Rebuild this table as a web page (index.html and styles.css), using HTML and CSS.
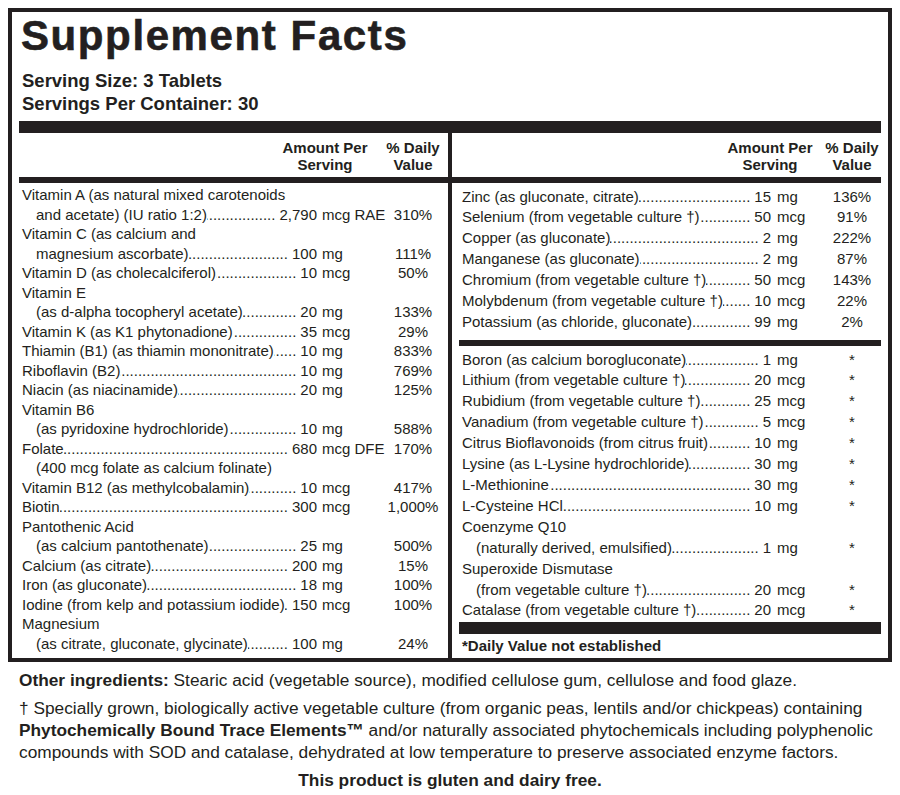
FILE: index.html
```html
<!DOCTYPE html>
<html>
<head>
<meta charset="utf-8">
<link rel="stylesheet" href="styles.css">
</head>
<body>
<div class="label">
  <h1 class="title">Supplement Facts</h1>
  <div class="serving">Serving Size: 3 Tablets</div>
  <div class="serving">Servings Per Container: 30</div>
  <div class="bar"></div>
  <div class="facts">
    <div class="head head-left"><span></span><span>Amount Per<br>Serving</span><span>% Daily<br>Value</span></div>
    <div class="divider"></div>
    <div class="head head-right"><span></span><span>Amount Per<br>Serving</span><span>% Daily<br>Value</span></div>
    <div class="sep"></div>

    <div class="col col-left">
      <div class="line">Vitamin A (as natural mixed carotenoids</div>
      <div class="row"><div class="lead ind"><span class="n">and acetate) (IU ratio 1:2)</span><span class="d"></span><span class="a">2,790</span></div><div class="u">mcg RAE</div><div class="v">310%</div></div>
      <div class="line">Vitamin C (as calcium and</div>
      <div class="row"><div class="lead ind"><span class="n">magnesium ascorbate)</span><span class="d"></span><span class="a">100</span></div><div class="u">mg</div><div class="v">111%</div></div>
      <div class="row"><div class="lead"><span class="n">Vitamin D (as cholecalciferol)</span><span class="d"></span><span class="a">10</span></div><div class="u">mcg</div><div class="v">50%</div></div>
      <div class="line">Vitamin E</div>
      <div class="row"><div class="lead ind"><span class="n">(as d-alpha tocopheryl acetate)</span><span class="d"></span><span class="a">20</span></div><div class="u">mg</div><div class="v">133%</div></div>
      <div class="row"><div class="lead"><span class="n">Vitamin K (as K1 phytonadione)</span><span class="d"></span><span class="a">35</span></div><div class="u">mcg</div><div class="v">29%</div></div>
      <div class="row"><div class="lead"><span class="n">Thiamin (B1) (as thiamin mononitrate)</span><span class="d"></span><span class="a">10</span></div><div class="u">mg</div><div class="v">833%</div></div>
      <div class="row"><div class="lead"><span class="n">Riboflavin (B2)</span><span class="d"></span><span class="a">10</span></div><div class="u">mg</div><div class="v">769%</div></div>
      <div class="row"><div class="lead"><span class="n">Niacin (as niacinamide)</span><span class="d"></span><span class="a">20</span></div><div class="u">mg</div><div class="v">125%</div></div>
      <div class="line">Vitamin B6</div>
      <div class="row"><div class="lead ind"><span class="n">(as pyridoxine hydrochloride)</span><span class="d"></span><span class="a">10</span></div><div class="u">mg</div><div class="v">588%</div></div>
      <div class="row"><div class="lead"><span class="n">Folate</span><span class="d"></span><span class="a">680</span></div><div class="u">mcg DFE</div><div class="v">170%</div></div>
      <div class="line ind">(400 mcg folate as calcium folinate)</div>
      <div class="row"><div class="lead"><span class="n">Vitamin B12 (as methylcobalamin)</span><span class="d"></span><span class="a">10</span></div><div class="u">mcg</div><div class="v">417%</div></div>
      <div class="row"><div class="lead"><span class="n">Biotin</span><span class="d"></span><span class="a">300</span></div><div class="u">mcg</div><div class="v">1,000%</div></div>
      <div class="line">Pantothenic Acid</div>
      <div class="row"><div class="lead ind"><span class="n">(as calcium pantothenate)</span><span class="d"></span><span class="a">25</span></div><div class="u">mg</div><div class="v">500%</div></div>
      <div class="row"><div class="lead"><span class="n">Calcium (as citrate)</span><span class="d"></span><span class="a">200</span></div><div class="u">mg</div><div class="v">15%</div></div>
      <div class="row"><div class="lead"><span class="n">Iron (as gluconate)</span><span class="d"></span><span class="a">18</span></div><div class="u">mg</div><div class="v">100%</div></div>
      <div class="row"><div class="lead"><span class="n">Iodine (from kelp and potassium iodide)</span><span class="d"></span><span class="a">150</span></div><div class="u">mcg</div><div class="v">100%</div></div>
      <div class="line">Magnesium</div>
      <div class="row"><div class="lead ind"><span class="n">(as citrate, gluconate, glycinate)</span><span class="d"></span><span class="a">100</span></div><div class="u">mg</div><div class="v">24%</div></div>
    </div>

    <div class="col col-right">
      <div class="row"><div class="lead"><span class="n">Zinc (as gluconate, citrate)</span><span class="d"></span><span class="a">15</span></div><div class="u">mg</div><div class="v">136%</div></div>
      <div class="row"><div class="lead"><span class="n">Selenium (from vegetable culture †)</span><span class="d"></span><span class="a">50</span></div><div class="u">mcg</div><div class="v">91%</div></div>
      <div class="row"><div class="lead"><span class="n">Copper (as gluconate)</span><span class="d"></span><span class="a">2</span></div><div class="u">mg</div><div class="v">222%</div></div>
      <div class="row"><div class="lead"><span class="n">Manganese (as gluconate)</span><span class="d"></span><span class="a">2</span></div><div class="u">mg</div><div class="v">87%</div></div>
      <div class="row"><div class="lead"><span class="n">Chromium (from vegetable culture †)</span><span class="d"></span><span class="a">50</span></div><div class="u">mcg</div><div class="v">143%</div></div>
      <div class="row"><div class="lead"><span class="n">Molybdenum (from vegetable culture †)</span><span class="d"></span><span class="a">10</span></div><div class="u">mcg</div><div class="v">22%</div></div>
      <div class="row"><div class="lead"><span class="n">Potassium (as chloride, gluconate)</span><span class="d"></span><span class="a">99</span></div><div class="u">mg</div><div class="v">2%</div></div>
      <div class="rsep"></div>
      <div class="row"><div class="lead"><span class="n">Boron (as calcium borogluconate)</span><span class="d"></span><span class="a">1</span></div><div class="u">mg</div><div class="v">*</div></div>
      <div class="row"><div class="lead"><span class="n">Lithium (from vegetable culture †)</span><span class="d"></span><span class="a">20</span></div><div class="u">mcg</div><div class="v">*</div></div>
      <div class="row"><div class="lead"><span class="n">Rubidium (from vegetable culture †)</span><span class="d"></span><span class="a">25</span></div><div class="u">mcg</div><div class="v">*</div></div>
      <div class="row"><div class="lead"><span class="n">Vanadium (from vegetable culture †)</span><span class="d"></span><span class="a">5</span></div><div class="u">mcg</div><div class="v">*</div></div>
      <div class="row"><div class="lead"><span class="n">Citrus Bioflavonoids (from citrus fruit)</span><span class="d"></span><span class="a">10</span></div><div class="u">mg</div><div class="v">*</div></div>
      <div class="row"><div class="lead"><span class="n">Lysine (as L-Lysine hydrochloride)</span><span class="d"></span><span class="a">30</span></div><div class="u">mg</div><div class="v">*</div></div>
      <div class="row"><div class="lead"><span class="n">L-Methionine</span><span class="d"></span><span class="a">30</span></div><div class="u">mg</div><div class="v">*</div></div>
      <div class="row"><div class="lead"><span class="n">L-Cysteine HCl</span><span class="d"></span><span class="a">10</span></div><div class="u">mg</div><div class="v">*</div></div>
      <div class="line">Coenzyme Q10</div>
      <div class="row"><div class="lead ind"><span class="n">(naturally derived, emulsified)</span><span class="d"></span><span class="a">1</span></div><div class="u">mg</div><div class="v">*</div></div>
      <div class="line">Superoxide Dismutase</div>
      <div class="row"><div class="lead ind"><span class="n">(from vegetable culture †)</span><span class="d"></span><span class="a">20</span></div><div class="u">mcg</div><div class="v">*</div></div>
      <div class="row"><div class="lead"><span class="n">Catalase (from vegetable culture †)</span><span class="d"></span><span class="a">20</span></div><div class="u">mcg</div><div class="v">*</div></div>
      <div class="rbar"></div>
      <div class="note">*Daily Value not established</div>
    </div>
  </div>
</div>
<div class="footer">
  <p class="other"><b>Other ingredients:</b> Stearic acid (vegetable source), modified cellulose gum, cellulose and food glaze.</p>
  <p class="foot">† Specially grown, biologically active vegetable culture (from organic peas, lentils and/or chickpeas) containing<br><b>Phytochemically Bound Trace Elements™</b> and/or naturally associated phytochemicals including polyphenolic<br>compounds with SOD and catalase, dehydrated at low temperature to preserve associated enzyme factors.</p>
  <p class="free">This product is gluten and dairy free.</p>
</div>
</body>
</html>
```

FILE: styles.css
```css
* { box-sizing: border-box; }
html, body { background: #fff; }
body {
  margin: 8px;
  font-family: "Liberation Sans", Arial, sans-serif;
  color: #231f20;
}
.label {
  border: 4px solid #231f20;
  padding: 0 7px;
}
.title {
  margin: 0;
  padding: 2px 0 0 2px;
  font-size: 42px;
  line-height: 44px;
  font-weight: 700;
  letter-spacing: 1.6px;
  -webkit-text-stroke: 0.6px #231f20;
}
.serving {
  font-size: 18.5px;
  font-weight: 700;
  line-height: 23px;
  padding-left: 3px;
}
.title + .serving { margin-top: 11px; }
.bar {
  height: 12px;
  background: #231f20;
  margin-top: 6px;
}
.facts {
  display: grid;
  grid-template-columns: 429px 4px 7px 1fr;
  grid-template-rows: auto 6px auto;
}
.divider {
  grid-column: 2;
  grid-row: 1 / -1;
  background: #231f20;
}
.sep {
  grid-column: 1 / -1;
  grid-row: 2;
  background: #231f20;
}
.head {
  grid-row: 1;
  display: grid;
  font-size: 15px;
  font-weight: 700;
  line-height: 17px;
  text-align: center;
  padding: 6px 0 4px;
}
.head-left {
  grid-column: 1;
  grid-template-columns: 1fr 100px 60px;
  column-gap: 8px;
  padding-right: 5px;
}
.head-right {
  grid-column: 4;
  grid-template-columns: 1fr 100px 58px;
  column-gap: 3px;
}
.col {
  grid-row: 3;
  font-size: 15px;
}
.col-left {
  grid-column: 1;
  line-height: 19.5px;
  padding: 2px 0 5px;
}
.col-right {
  grid-column: 4;
  line-height: 20.9px;
  padding-top: 3.5px;
}
.line {
  padding-left: 3px;
  white-space: nowrap;
}
.line.ind { padding-left: 17px; }
.row {
  display: grid;
  white-space: nowrap;
}
.col-left .row { grid-template-columns: 298px 66px 60px; }
.col-right .row { grid-template-columns: 312px 52px 58px; }
.lead {
  display: flex;
  padding-left: 3px;
  min-width: 0;
}
.lead.ind { padding-left: 17px; }
.n { flex: none; }
.d {
  flex: 1 1 0;
  min-width: 0;
  overflow: hidden;
  direction: rtl;
  padding-left: 1px;
}
.d::after {
  content: "........................................................................................................................";
}
.a { flex: none; margin-left: 4px; }
.col-left .u { padding-left: 5px; }
.col-right .u { padding-left: 6px; }
.v { text-align: center; }
.rsep {
  height: 6px;
  background: #231f20;
  margin: 7px 0 3.7px;
}
.rbar {
  height: 12px;
  background: #231f20;
  margin-top: 1px;
}
.note {
  font-size: 15px;
  font-weight: 700;
  line-height: 24px;
  padding-left: 3px;
}
.footer {
  padding: 0 0 0 11px;
  font-size: 17.3px;
}
.footer p { margin: 0; line-height: 22px; }
.other { margin-top: 7px !important; }
.foot { margin-top: 6px !important; white-space: nowrap; }
.free {
  margin-top: 6px !important;
  text-align: center;
  font-weight: 700;
  padding-right: 11px;
}
```
